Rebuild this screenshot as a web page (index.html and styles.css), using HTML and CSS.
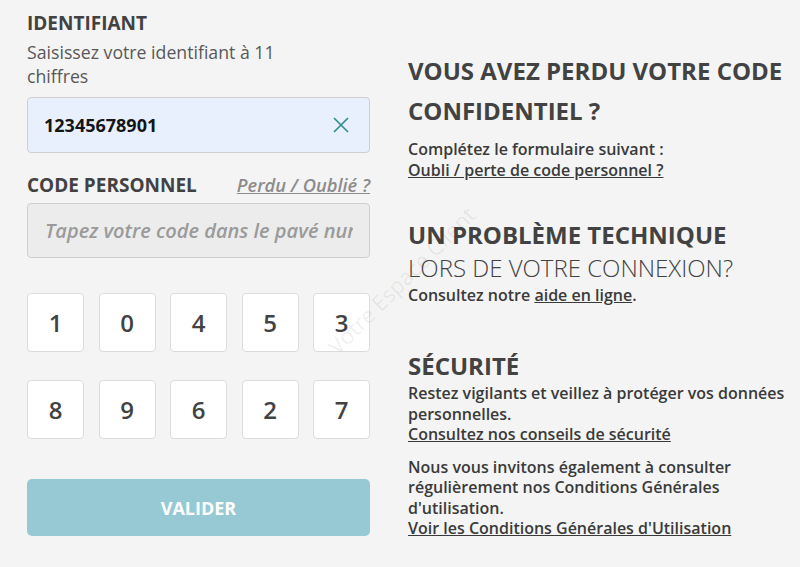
FILE: index.html
```html
<!DOCTYPE html>
<html lang="fr">
<head>
<meta charset="utf-8">
<title>Connexion</title>
<link rel="stylesheet" href="styles.css">
</head>
<body>
<div class="page">
  <form class="login">
    <h3 class="label">IDENTIFIANT</h3>
    <p class="hint">Saisissez votre identifiant à 11 chiffres</p>
    <div class="field field-filled">
      <input class="field-input" type="text" value="12345678901">
      <svg class="clear" width="18" height="18" viewBox="0 0 18 18"><path d="M2 2L16 16M16 2L2 16" stroke="#2b8c8c" stroke-width="1.6" fill="none"/></svg>
    </div>
    <div class="label-row">
      <h3 class="label">CODE PERSONNEL</h3>
      <a class="forgot" href="#">Perdu / Oublié ?</a>
    </div>
    <div class="field field-code">
      <input class="field-input code-input" type="text" placeholder="Tapez votre code dans le pavé numérique">
    </div>
    <div class="keypad">
      <button type="button" class="key">1</button>
      <button type="button" class="key">0</button>
      <button type="button" class="key">4</button>
      <button type="button" class="key">5</button>
      <button type="button" class="key">3</button>
      <button type="button" class="key">8</button>
      <button type="button" class="key">9</button>
      <button type="button" class="key">6</button>
      <button type="button" class="key">2</button>
      <button type="button" class="key">7</button>
    </div>
    <button type="button" class="submit">VALIDER</button>
  </form>

  <aside class="help">
    <section class="block block-lost">
      <h2 class="title">VOUS AVEZ PERDU VOTRE CODE CONFIDENTIEL ?</h2>
      <p class="text">Complétez le formulaire suivant :<br><a href="#">Oubli / perte de code personnel ?</a></p>
    </section>
    <section class="block block-tech">
      <h2 class="title title-tight">UN PROBLÈME TECHNIQUE<br><span class="light">LORS DE VOTRE CONNEXION?</span></h2>
      <p class="text">Consultez notre <a href="#">aide en ligne</a>.</p>
    </section>
    <section class="block block-sec">
      <h2 class="title title-sec">SÉCURITÉ</h2>
      <p class="text text-sec">Restez vigilants et veillez à protéger vos données personnelles.<br><a href="#">Consultez nos conseils de sécurité</a></p>
      <p class="text text-sec text-cgu">Nous vous invitons également à consulter régulièrement nos Conditions Générales d'utilisation.<br><a href="#">Voir les Conditions Générales d'Utilisation</a></p>
    </section>
  </aside>
</div>
<div class="watermark">Votre Espace Client</div>
</body>
</html>
```

FILE: styles.css
```css
* { box-sizing: border-box; }
html, body { margin: 0; padding: 0; }
body {
  background: #f4f4f4;
  font-family: "Open Sans", "Liberation Sans", sans-serif;
  color: #424242;
  width: 800px;
  height: 567px;
  overflow: hidden;
  position: relative;
}
.page {
  display: flex;
  gap: 38px;
  padding-left: 27px;
}
.login {
  width: 343px;
  flex: none;
  display: flex;
  flex-direction: column;
  padding-top: 11px;
}
.label {
  margin: 0;
  font-size: 19px;
  font-weight: 700;
  line-height: 24px;
  color: #424242;
}
.hint {
  margin: 5px 0 0;
  font-size: 17.7px;
  font-weight: 400;
  line-height: 24px;
  color: #585858;
  width: 280px;
}
.field {
  position: relative;
  height: 56px;
  border: 1px solid #cfcfcf;
  border-radius: 4px;
  display: flex;
  align-items: center;
}
.field-filled {
  margin-top: 9px;
  background: #e8f0fe;
}
.field-code {
  margin-top: 6px;
  background: #ececec;
  height: 55px;
}
.field-input {
  flex: 1;
  min-width: 0;
  border: 0;
  background: transparent;
  font-family: inherit;
  font-size: 18px;
  font-weight: 700;
  color: #151515;
  padding: 0 17px 0 16px;
  height: 100%;
  outline: none;
}
.code-input {
  padding: 0 16px 0 17px;
  font-size: 20px;
}
.code-input::placeholder {
  color: #9a9a9a;
  font-style: italic;
  font-weight: 600;
  opacity: 1;
}
.clear {
  margin-right: 19px;
  flex: none;
}
.label-row {
  margin-top: 20px;
  height: 24px;
  display: flex;
  justify-content: space-between;
  align-items: center;
}
.forgot {
  font-size: 18.3px;
  line-height: 24px;
  font-style: italic;
  font-weight: 600;
  color: #8c8c8c;
  text-decoration: underline;
}
.keypad {
  margin-top: 35px;
  display: grid;
  grid-template-columns: repeat(5, 1fr);
  column-gap: 14.5px;
  row-gap: 28px;
}
.key {
  height: 59px;
  background: #fff;
  border: 1px solid #dcdcdc;
  border-radius: 4px;
  font-family: inherit;
  font-size: 24px;
  font-weight: 600;
  color: #424242;
  padding: 0;
}
.submit {
  margin-top: 40px;
  height: 57px;
  border: 0;
  border-radius: 5px;
  background: #97c9d4;
  color: #fff;
  font-family: inherit;
  font-size: 18px;
  font-weight: 700;
}
.help {
  width: 390px;
  flex: none;
  padding-top: 51px;
}
.block { margin: 0; }
.title {
  margin: 0;
  font-size: 24px;
  font-weight: 700;
  line-height: 40px;
  color: #424242;
}
.text {
  margin: 8px 0 0;
  font-size: 16px;
  font-weight: 600;
  line-height: 21px;
  color: #3a3a3a;
}
.text a { color: #3a3a3a; text-decoration: underline; }
.block-tech { margin-top: 37px; }
.title-tight {
  font-size: 24px;
  line-height: 33px;
}
.title-tight .light { font-weight: 300; }
.block-tech .text { margin-top: 1px; }
.block-sec { margin-top: 45px; }
.title-sec {
  font-size: 24px;
  line-height: 30px;
}
.text-sec {
  margin-top: 2px;
  line-height: 20.5px;
}
.text-cgu { margin-top: 12px; }
.watermark {
  position: absolute;
  left: 401px;
  top: 280px;
  transform: translate(-50%, -50%) rotate(-45deg);
  font-size: 22px;
  color: rgba(0, 0, 0, 0.07);
  white-space: nowrap;
  pointer-events: none;
}
```
